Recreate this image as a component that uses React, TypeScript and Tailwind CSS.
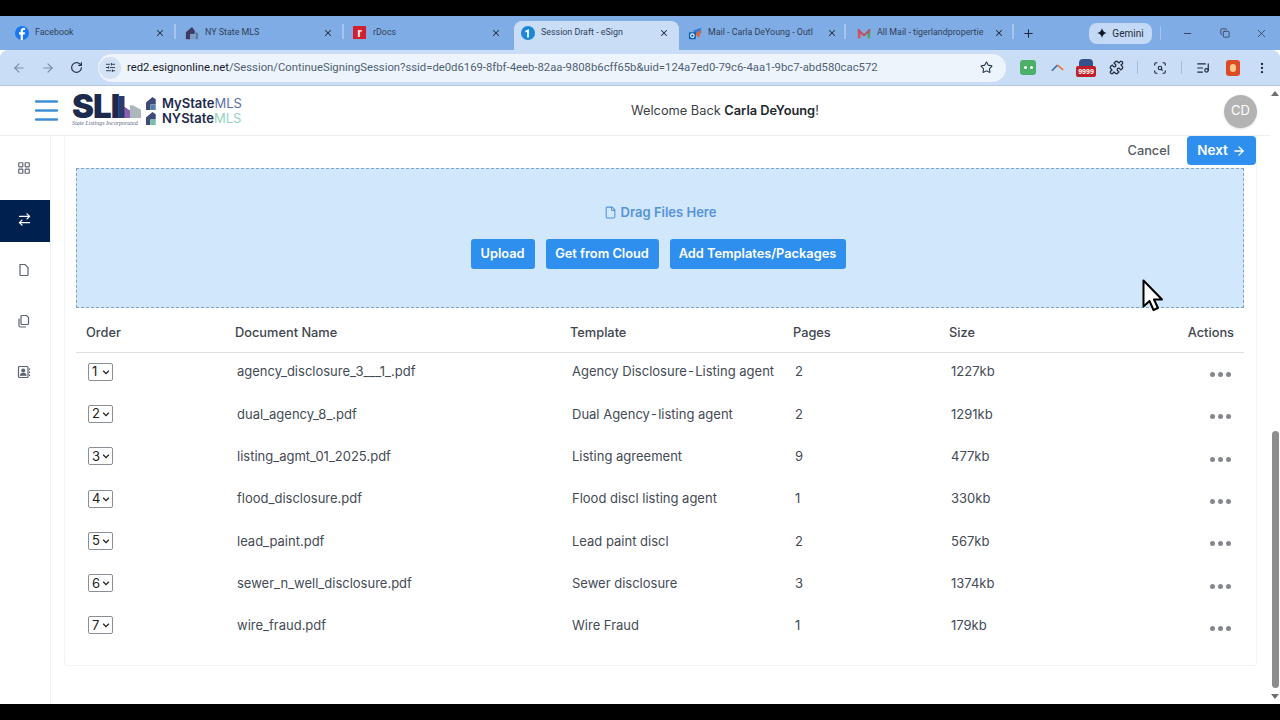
import { ArrowLeft, ArrowRight, ArrowRightLeft, Copy, File, LayoutGrid, Menu, Plus, RotateCw, Star, X, Minus, EllipsisVertical, Puzzle, ScanSearch, ListMusic, SlidersHorizontal } from 'lucide-react';

const tabs = [
	{ title: 'Facebook', box: 'w-[172px] pl-[9px] pr-[13px]', icon: 'fb', sep: true },
	{ title: 'NY State MLS', box: 'w-[168px] pl-[7px] pr-[13px]', icon: 'house', sep: true },
	{ title: 'rDocs', box: 'w-[168px] pl-[7px] pr-[13px]', icon: 'rdocs' },
	{ title: 'Session Draft - eSign', box: 'w-[165px] pl-[7px] pr-[10px]', icon: 'esign', active: true },
	{ title: 'Mail - Carla DeYoung - Outl', box: 'w-[169px] pl-[9px] pr-[11px]', icon: 'outlook', sep: true },
	{ title: 'All Mail - tigerlandpropertie', box: 'w-[168px] pl-[9px] pr-[12px]', icon: 'gmail', sep: true },
];

const docs = [
	{ order: 1, name: 'agency_disclosure_3___1_.pdf', template: 'Agency Disclosure', suffix: 'Listing agent', pages: 2, size: '1227kb' },
	{ order: 2, name: 'dual_agency_8_.pdf', template: 'Dual Agency', suffix: 'listing agent', pages: 2, size: '1291kb' },
	{ order: 3, name: 'listing_agmt_01_2025.pdf', template: 'Listing agreement', pages: 9, size: '477kb' },
	{ order: 4, name: 'flood_disclosure.pdf', template: 'Flood discl listing agent', pages: 1, size: '330kb' },
	{ order: 5, name: 'lead_paint.pdf', template: 'Lead paint discl', pages: 2, size: '567kb' },
	{ order: 6, name: 'sewer_n_well_disclosure.pdf', template: 'Sewer disclosure', pages: 3, size: '1374kb' },
	{ order: 7, name: 'wire_fraud.pdf', template: 'Wire Fraud', pages: 1, size: '179kb' },
];

function TabIcon({ icon }: { icon: string }) {
	if (icon === 'fb') {
		return (
			<svg viewBox="0 0 16 16" className="w-[14px] h-[14px] shrink-0">
				<circle cx="8" cy="8" r="8" fill="#1877f2" />
				<path d="M9 16V9.6h2l.4-2.4H9V5.9c0-.8.3-1.3 1.3-1.3h1.2V2.5c-.6-.1-1.2-.2-1.8-.2-2 0-3.2 1.2-3.2 3.2v1.7H4.6v2.4h1.9V16z" fill="#fff" />
			</svg>
		);
	}
	if (icon === 'house') {
		return (
			<svg viewBox="0 0 16 16" className="w-[14px] h-[14px] shrink-0">
				<path d="M8 1 1 7v8h5V9h5V5z" fill="#3f3a63" />
				<path d="M6 10h5v5H6z" fill="#7d9cb8" />
				<path d="M12 6l3 2.5V15h-3z" fill="#5d7f9f" />
			</svg>
		);
	}
	if (icon === 'rdocs') {
		return (
			<div className="w-[13px] h-[13px] bg-[#d3202f] flex items-end justify-center shrink-0 mr-[1px]">
				<span className="text-white text-[12px] leading-[11px] font-bold font-['Liberation_Sans',sans-serif]">r</span>
			</div>
		);
	}
	if (icon === 'esign') {
		return (
			<svg viewBox="0 0 16 16" className="w-[14px] h-[14px] shrink-0">
				<circle cx="8" cy="8" r="8" fill="#1b87d8" />
				<path d="M5 5.5 9 3.5V13H7V6.5L5 7.4z" fill="#fff" />
			</svg>
		);
	}
	if (icon === 'outlook') {
		return (
			<svg viewBox="0 0 16 16" className="w-[14px] h-[14px] shrink-0">
				<path d="M6 5 15 2v6l-7 3z" fill="#2f7fd6" />
				<path d="M8 9l7-5-2 9z" fill="#e0613a" />
				<rect x="1" y="7" width="8" height="8" rx="1" fill="#0f5fb3" />
				<circle cx="5" cy="11" r="2" fill="none" stroke="#fff" strokeWidth="1.2" />
			</svg>
		);
	}
	return (
		<svg viewBox="0 0 16 16" className="w-[14px] h-[14px] shrink-0">
			<path d="M1 14V3l3 1.5V14z" fill="#d9534f" />
			<path d="M12 14V4.5L15 3v11z" fill="#4fa35c" />
			<path d="M1 3l7 6 7-6v3L8 12 1 6z" fill="#c4495f" />
		</svg>
	);
}

function ChromeBar() {
	return (
		<>
			<div className="h-4 bg-black shrink-0" />
			<div className="h-[34px] bg-[#80ace5] flex items-end pl-[6px] shrink-0 font-['Roboto',sans-serif] text-[8.9px] text-[#2f3f55]">
				{tabs.map(tab => (
					<div
						key={tab.title}
						className={`${tab.box} relative h-[29px] flex items-center pb-[6px] rounded-t-lg ${tab.active ? 'bg-[#c9ddf7]' : ''}`}>
						<TabIcon icon={tab.icon} />
						<span className="ml-[6px] flex-1 truncate">{tab.title}</span>
						<X size={10} strokeWidth={2.5} className="text-[#1f2a3a] shrink-0" />
						{tab.sep && <div className="absolute right-[2px] top-[3px] w-[2px] h-[15px] bg-[#a9c5ec]" />}
					</div>
				))}
				<div className="flex items-center mb-[2px] h-[30px] text-[#2f3f55]">
					<Plus size={13} strokeWidth={2} className="text-[#1f2a3a] ml-[6px]" />
					<div className="ml-[54px] w-[63px] h-[21px] rounded-lg bg-[#c4d9f5] flex items-center justify-center gap-[5px] text-[10px] text-[#1f2a3a]">
						<svg viewBox="0 0 16 16" className="w-[10px] h-[10px]">
							<path d="M8 0c.6 4.4 3.2 7.2 8 8-4.8.8-7.4 3.6-8 8-.6-4.4-3.2-7.2-8-8 4.8-.8 7.4-3.6 8-8z" fill="#111827" />
						</svg>
						Gemini
					</div>
					<div className="ml-[8px] w-px h-[14px] bg-[#a9c5ec]" />
					<Minus size={11} className="ml-[21px]" />
					<Copy size={10} className="ml-[27px]" />
					<X size={13} strokeWidth={1.5} className="ml-[25px]" />
				</div>
			</div>
			<div className="h-9 bg-[#c9ddf7] flex items-center shrink-0 rounded-t-lg border-b border-[#b5c6dc]">
				<ArrowLeft size={14} className="ml-[12px] text-[#7c8ea6]" />
				<ArrowRight size={14} className="ml-[15px] text-[#7c8ea6]" />
				<RotateCw size={13} strokeWidth={2.2} className="ml-[15px] text-[#26364d]" />
				<div className="ml-[15px] w-[908px] h-[28px] rounded-full bg-[#edf4fc] flex items-center">
					<div className="ml-[1px] w-[22px] h-[22px] rounded-full bg-[#d4e2f5] flex items-center justify-center">
						<SlidersHorizontal size={11} className="text-[#26364d]" />
					</div>
					<span className="ml-[6px] mt-[1px] flex-1 text-[11.3px] font-['Roboto',sans-serif] text-[#4f5f73] whitespace-nowrap overflow-hidden">
						<span className="text-[#17202c]">red2.esignonline.net</span>
						/Session/ContinueSigningSession?ssid=de0d6169-8fbf-4eeb-82aa-9808b6cff65b&amp;uid=124a7ed0-79c6-4aa1-9bc7-abd580cac572
					</span>
					<Star size={13} className="mr-[13px] text-[#26364d]" />
				</div>
				<div className="w-[16px] h-[15px] ml-[14px] bg-[#4caf68] rounded-[3px] flex items-center justify-center gap-[3px]">
					<span className="w-[3px] h-[3px] bg-white rounded-full" />
					<span className="w-[3px] h-[3px] bg-white rounded-full" />
				</div>
				<svg viewBox="0 0 16 10" className="w-[13px] h-[9px] ml-[15px]">
					<path d="M1 9 8 2" stroke="#3c6fb0" strokeWidth="2" />
					<path d="M8 2l7 6" stroke="#e0763a" strokeWidth="2" />
				</svg>
				<div className="relative w-[20px] h-[18px] ml-[12px]">
					<div className="absolute top-0 left-[3px] w-[14px] h-[8px] bg-[#34518c] rounded-t-sm" />
					<div className="absolute bottom-0 left-0 w-[20px] h-[11px] bg-[#c01f2a] rounded-[2px] text-white text-[7px] leading-[11px] text-center font-bold font-['Liberation_Sans',sans-serif]">
						9999
					</div>
				</div>
				<Puzzle size={15} className="ml-[13px] text-[#1f2a3a]" />
				<div className="ml-[13px] w-px h-[13px] bg-[#a9bbd3]" />
				<ScanSearch size={14} className="ml-[15px] text-[#1f2a3a]" />
				<div className="ml-[14px] w-px h-[13px] bg-[#a9bbd3]" />
				<ListMusic size={14} className="ml-[14px] text-[#1f2a3a]" />
				<div className="ml-[16px] w-[14px] h-[16px] rounded-[3px] bg-[#dd4a26] flex items-center justify-center">
					<span className="w-[6px] h-[8px] bg-[#f3c98a] rounded-sm" />
				</div>
				<EllipsisVertical size={14} className="ml-[15px] text-[#1f2a3a]" />
			</div>
		</>
	);
}

function Logo() {
	return (
		<div className="flex items-center ml-[10px]">
			<div className="w-[69px] shrink-0">
				<div className="flex items-end h-[25px]">
					<span className="text-[33px] leading-[25px] font-black tracking-[-1px] text-[#1c2a4e]">SLI</span>
					<svg viewBox="0 0 24 24" className="w-[22px] h-[24px] shrink-0">
						<path d="M0 0h6v12l6 4v8H0z" fill="#2e3a6a" />
						<path d="M6 12l6 4v8H6z" fill="#8a5fb0" />
						<path d="M12 10h3l9 5v9H12z" fill="#aab8bb" />
					</svg>
				</div>
				<div className="mt-[1px] text-[6px] leading-[7px] text-[#5c6a86] font-['Liberation_Serif',serif] italic whitespace-nowrap">State Listings Incorporated</div>
			</div>
			<div className="ml-[5px] text-[13px] leading-[15px] font-semibold">
				{['My', 'NY'].map(prefix => (
					<div key={prefix} className="flex items-center">
						<svg viewBox="0 0 12 12" className="w-[13px] h-[13px] mr-[3px]">
							<path d="M6 0 0 5v7h4V7h5V2z" fill="#3e4a78" />
							<path d="M4 7h5v5H4z" fill={prefix === 'My' ? '#5d80a6' : '#7cbdb0'} />
						</svg>
						<span className="text-[#1c2a4e]">{prefix}State</span>
						<span className={`font-normal ${prefix === 'My' ? 'text-[#5a6fa6]' : 'text-[#93d3c2]'}`}>MLS</span>
					</div>
				))}
			</div>
		</div>
	);
}

function Sidebar() {
	const items = [
		<LayoutGrid size={14} />,
		<ArrowRightLeft size={15} strokeWidth={2.2} />,
		<svg viewBox="0 0 14 14" className="w-[14px] h-[14px]" fill="none" stroke="currentColor" strokeWidth="1.2">
			<path d="M3 1.5h5l3 3v7a1 1 0 0 1-1 1H4a1 1 0 0 1-1-1z" />
		</svg>,
		<svg viewBox="0 0 14 14" className="w-[14px] h-[14px]" fill="none" stroke="currentColor" strokeWidth="1.2">
			<path d="M5 1.5h4.500l2 2v6a1 1 0 0 1-1 1H5a1 1 0 0 1-1-1v-7a1 1 0 0 1 1-1z" />
			<path d="M2 4.500v7a1.500 1.500 0 0 0 1.500 1.500H9" />
		</svg>,
		<svg viewBox="0 0 14 14" className="w-[14px] h-[14px]" fill="none" stroke="currentColor" strokeWidth="1.2">
			<rect x="1.500" y="1.500" width="9.500" height="11" rx="1" />
			<circle cx="6.200" cy="5.500" r="1.400" fill="currentColor" />
			<path d="M3.500 10.200c.5-2.400 5-2.400 5.400 0z" fill="currentColor" />
			<path d="M12.500 3.500v1.500M12.500 6.500V8M12.500 9.500V11" />
		</svg>,
	];
	return (
		<div className="w-[51px] shrink-0 border-r border-[#f1f1f1] pt-[6px]">
			{items.map((icon, i) => (
				<div key={i} className="h-[51px] flex items-center">
					<div className={`h-[42px] w-[50px] flex items-center pl-[17px] ${i === 1 ? 'mt-[5px] pb-[3px] bg-[#00204f] text-white' : 'text-[#5b6470]'}`}>{icon}</div>
				</div>
			))}
		</div>
	);
}

function DocumentTable() {
	const cols = 'grid grid-cols-[149px_335px_223px_156px_1fr] pl-[10px] pr-[10px]';
	return (
		<div>
			<div className={`${cols} h-[45px] pt-[6px] items-center font-medium text-[#3f4650] border-b border-[#dfe1e4] text-[12.8px]`}>
				<div>Order</div>
				<div>Document Name</div>
				<div>Template</div>
				<div>Pages</div>
				<div className="flex justify-between">
					<span>Size</span>
					<span>Actions</span>
				</div>
			</div>
			{docs.map(doc => (
				<div key={doc.order} className={`${cols} h-[42.3px] pb-[4px] items-center text-[13px] text-[#444b55]`}>
					<div className="pl-[2px]">
						<div className="-mt-[1px] w-[25px] h-[18px] border border-[#8a8f96] rounded-[2px] flex items-center pl-[3px] text-[#222]">
							<span className="flex-1 text-[13px] leading-none">{doc.order}</span>
							<svg viewBox="0 0 10 10" className="w-[8px] h-[8px] mr-[2px]">
								<path d="M1.500 3.500 5 7l3.500-3.500" fill="none" stroke="#222" strokeWidth="1.600" />
							</svg>
						</div>
					</div>
					<div className="pl-[2px] whitespace-nowrap">{doc.name}</div>
					<div className="pl-[2px] whitespace-nowrap">
						{doc.template}
						{doc.suffix && <span className="[word-spacing:-2.5px]"> - </span>}
						{doc.suffix}
					</div>
					<div className="pl-[2px]">{doc.pages}</div>
					<div className="pl-[2px] flex justify-between items-center">
						<span>{doc.size}</span>
						<div className="flex gap-[3px] mt-[5px] mr-[3px]">
							<span className="w-[5px] h-[5px] rounded-full bg-[#84888d]" />
							<span className="w-[5px] h-[5px] rounded-full bg-[#84888d]" />
							<span className="w-[5px] h-[5px] rounded-full bg-[#84888d]" />
						</div>
					</div>
				</div>
			))}
		</div>
	);
}

export default function App() {
	return (
		<div className="relative w-[1280px] h-[720px] overflow-hidden flex flex-col bg-white font-['Inter',sans-serif]">
			<ChromeBar />
			<div className="flex-1 flex min-h-0">
				<div className="w-[1270px] shrink-0 flex flex-col">
					<div className="h-[50px] shrink-0 flex items-center border-b border-[#efefef]">
						<Menu size={31} strokeWidth={2} className="ml-[31px] text-[#3c8fd6] shrink-0" />
						<Logo />
						<div className="flex-1 mt-[1px] text-center text-[12.8px] text-[#3a3f46] pr-[16px]">
							Welcome Back <span className="font-semibold text-[#24282e]">Carla DeYoung</span>!
						</div>
						<div className="mr-[13px] mt-[1px] w-[33px] h-[33px] rounded-full bg-[#b3b3b3] shadow flex items-center justify-center text-white text-[13px] shrink-0">
							CD
						</div>
					</div>
					<div className="flex-1 flex min-h-0">
						<Sidebar />
						<div className="ml-[13px] w-[1193px] h-[530px] border border-[#f3f3f3] border-t-0 rounded-b pl-[11px] pr-[12px]">
							<div className="h-[32px] flex justify-end items-center">
								<span className="text-[12.8px] font-medium text-[#555b63] mr-[17px] -mt-[3px]">Cancel</span>
								<div className="w-[69px] h-[29px] -mt-[3px] -mr-[12px] bg-[#2f8fee] rounded-sm text-white text-[13.5px] font-semibold flex items-center justify-center gap-1">
									Next <ArrowRight size={14} strokeWidth={2.2} />
								</div>
							</div>
							<div className="h-[140px] border border-dashed border-[#7fa4c4] bg-[#d1e7fb] flex flex-col items-center">
								<div className="mt-[34px] flex items-center gap-[4px] text-[13px] font-semibold text-[#5593da]">
									<File size={13} />
									Drag Files Here
								</div>
								<div className="mt-[16px] -ml-[4px] flex gap-[11px] text-[12.8px] font-semibold text-white">
									<div className="h-[30px] w-[64px] rounded-[3px] bg-[#2f8fee] flex items-center justify-center">Upload</div>
									<div className="h-[30px] w-[113px] rounded-[3px] bg-[#2f8fee] flex items-center justify-center">Get from Cloud</div>
									<div className="h-[30px] w-[176px] rounded-[3px] bg-[#2f8fee] flex items-center justify-center">Add Templates/Packages</div>
								</div>
							</div>
							<DocumentTable />
						</div>
					</div>
				</div>
				<div className="flex-1 flex flex-col items-center pt-[5px]">
					<div className="w-0 h-0 border-l-[4px] border-r-[4px] border-b-[5px] border-l-transparent border-r-transparent border-b-[#6e6e6e]" />
					<div className="mt-[335px] w-[7px] h-[257px] rounded-full bg-[#8d8d8d]" />
					<div className="mt-[6px] w-0 h-0 border-l-[4px] border-r-[4px] border-t-[5px] border-l-transparent border-r-transparent border-t-[#6e6e6e]" />
				</div>
			</div>
			<div className="h-4 bg-black shrink-0" />
			{/* mouse pointer from the screen recording */}
			<svg viewBox="0 0 22 32" className="absolute left-[1142px] top-[279px] w-[22px] h-[32px]">
				<path d="M1.500 1.500v26l6-5.500 4 9 4.500-2-4-8.500h8z" fill="#fff" stroke="#000" strokeWidth="2" strokeLinejoin="round" />
			</svg>
		</div>
	);
}
